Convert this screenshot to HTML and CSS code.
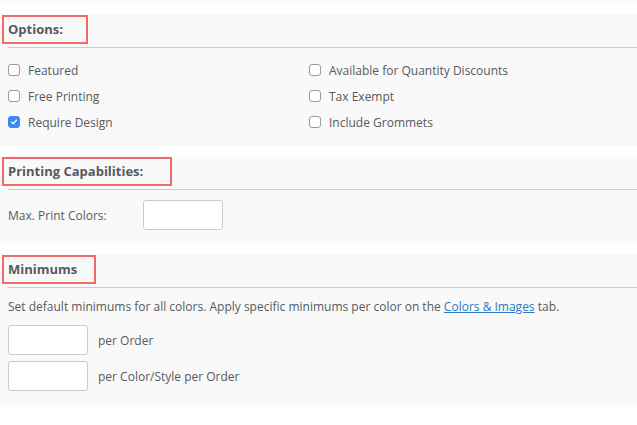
FILE: index.html
```html
<!DOCTYPE html>
<html>
<head>
<meta charset="utf-8">
<link rel="stylesheet" href="styles.css">
</head>
<body>
<div class="topstrip"></div>

<section class="panel">
  <div class="head"><h3 class="title t-options">Options:</h3></div>
  <div class="opts">
    <label class="opt"><span class="cb"></span>Featured</label>
    <label class="opt"><span class="cb"></span>Available for Quantity Discounts</label>
    <label class="opt"><span class="cb"></span>Free Printing</label>
    <label class="opt"><span class="cb"></span>Tax Exempt</label>
    <label class="opt"><span class="cb on"><svg viewBox="0 0 12 12" width="12" height="12"><path d="M3.2 6.3 L5.1 8.1 L8.9 3.9" fill="none" stroke="#fff" stroke-width="1.6" stroke-linecap="round" stroke-linejoin="round"/></svg></span>Require Design</label>
    <label class="opt"><span class="cb"></span>Include Grommets</label>
  </div>
</section>

<section class="panel">
  <div class="head"><h3 class="title t-print">Printing Capabilities:</h3></div>
  <div class="printrow">
    <span class="lbl">Max. Print Colors:</span>
    <span class="field"></span>
  </div>
</section>

<section class="panel">
  <div class="head"><h3 class="title t-min">Minimums</h3></div>
  <p class="desc">Set default minimums for all colors. Apply specific minimums per color on the <a href="#">Colors &amp; Images</a> tab.</p>
  <div class="minlist">
    <div class="minrow"><span class="field"></span><span class="lbl">per Order</span></div>
    <div class="minrow"><span class="field"></span><span class="lbl">per Color/Style per Order</span></div>
  </div>
</section>
</body>
</html>
```

FILE: styles.css
```css
html, body {
  margin: 0;
  padding: 0;
  background: #ffffff;
  font-family: "Open Sans", "Liberation Sans", sans-serif;
  font-size: 12px;
  color: #555a60;
}

.topstrip {
  height: 4px;
  background: #f9f9f9;
}

.panel {
  background: #f9f9f9;
  margin-top: 10px;
  padding: 1px 0 0 8px;
}

.head {
  border-bottom: 1px solid #cccccc;
  padding-bottom: 3px;
}

.title {
  margin: 0 0 0 -6px;
  box-sizing: border-box;
  height: 29px;
  border: 2px solid #f26b6b;
  padding: 0 0 0 4px;
  font-size: 13px;
  font-weight: 700;
  line-height: 25px;
  color: #555a60;
}

.t-options { width: 86px; }
.t-print { width: 170px; }
.t-min { width: 94px; }

.opts {
  display: grid;
  grid-template-columns: 301px 1fr;
  padding: 9px 0 11px;
}

.opt {
  display: flex;
  align-items: center;
  height: 26px;
}

.cb {
  box-sizing: border-box;
  width: 12px;
  height: 12px;
  border: 1px solid #9a9a9a;
  border-radius: 3px;
  background: #ffffff;
  margin-right: 8px;
  display: flex;
  align-items: center;
  justify-content: center;
}

.cb.on {
  background: #3a8af2;
  border-color: #3a8af2;
}

.cb.on svg {
  display: block;
}

.printrow {
  display: flex;
  align-items: center;
  padding: 10px 0 14px;
}

.printrow .lbl {
  width: 135px;
}

.field {
  box-sizing: border-box;
  width: 80px;
  height: 30px;
  border: 1px solid #cccccc;
  border-radius: 3px;
  background: #ffffff;
  display: block;
}

.desc {
  margin: 0;
  padding: 10px 0 0;
  line-height: 18px;
}

.desc a {
  color: #2a7bc4;
  text-decoration: underline;
}

.minlist {
  display: flex;
  flex-direction: column;
  gap: 6px;
  padding: 9px 0 16px;
}

.minrow {
  display: flex;
  align-items: center;
}

.minrow .lbl {
  margin-left: 10px;
}
```
